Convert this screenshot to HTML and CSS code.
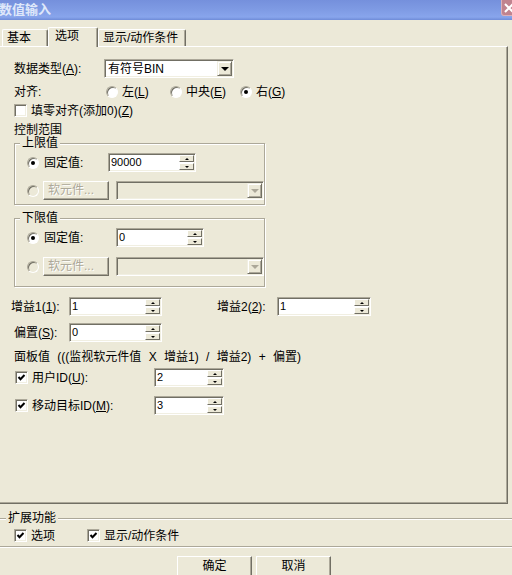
FILE: index.html
```html
<!DOCTYPE html>
<html lang="zh-CN">
<head>
    <meta charset="UTF-8">
    <title>数值输入</title>
    <link rel="stylesheet" href="styles.css">
</head>
<body>
    <div class="titlebar">
        <span class="title">数值输入</span>
        <span class="close">
            <svg width="10" height="10" viewBox="0 0 10 10"><path d="M1 1 L9 9 M9 1 L1 9" stroke="#fff" stroke-width="2"/></svg>
        </span>
    </div>

    <div class="tabs">
        <div class="tab tab-basic">基本</div>
        <div class="tab tab-active">选项</div>
        <div class="tab tab-cond">显示/动作条件</div>
    </div>

    <div class="panel">
        <div class="row r-type">
            <span class="lbl-type">数据类型(<u>A</u>):</span>
            <div class="combo combo-type">
                <span>有符号BIN</span>
                <span class="drop"><i class="tri"></i></span>
            </div>
        </div>

        <div class="row r-align">
            <span class="lbl-align">对齐:</span>
            <label class="opt opt-left"><i class="radio"></i><span>左(<u>L</u>)</span></label>
            <label class="opt opt-mid"><i class="radio"></i><span>中央(<u>E</u>)</span></label>
            <label class="opt"><i class="radio on"></i><span>右(<u>G</u>)</span></label>
        </div>

        <div class="row r-zero">
            <label class="opt"><i class="check"></i><span>填零对齐(添加0)(<u>Z</u>)</span></label>
        </div>

        <div class="row r-title">控制范围</div>

        <div class="group group-upper">
            <span class="group-title">上限值</span>
            <div class="row g-row1">
                <i class="radio on"></i>
                <span class="fix-lbl">固定值:</span>
                <div class="spin spin-88">
                    <span class="spin-val">90000</span>
                    <span class="spin-btns"><b class="sb"><i class="up"></i></b><b class="sb"><i class="dn"></i></b></span>
                </div>
            </div>
            <div class="row g-row2">
                <i class="radio off"></i>
                <span class="btn-dev">软元件...</span>
                <div class="combo combo-off">
                    <span class="drop"><i class="tri"></i></span>
                </div>
            </div>
        </div>

        <div class="group group-lower">
            <span class="group-title">下限值</span>
            <div class="row g-row1">
                <i class="radio on"></i>
                <span class="fix-lbl fix-wide">固定值:</span>
                <div class="spin spin-88">
                    <span class="spin-val">0</span>
                    <span class="spin-btns"><b class="sb"><i class="up"></i></b><b class="sb"><i class="dn"></i></b></span>
                </div>
            </div>
            <div class="row g-row2 g-row2-lower">
                <i class="radio off"></i>
                <span class="btn-dev">软元件...</span>
                <div class="combo combo-off">
                    <span class="drop"><i class="tri"></i></span>
                </div>
            </div>
        </div>

        <div class="row r-gain">
            <span class="lbl-gain1">增益1(<u>1</u>):</span>
            <div class="spin spin-93">
                <span class="spin-val">1</span>
                <span class="spin-btns"><b class="sb"><i class="up"></i></b><b class="sb"><i class="dn"></i></b></span>
            </div>
            <span class="lbl-gain2">增益2(<u>2</u>):</span>
            <div class="spin spin-94">
                <span class="spin-val">1</span>
                <span class="spin-btns"><b class="sb"><i class="up"></i></b><b class="sb"><i class="dn"></i></b></span>
            </div>
        </div>

        <div class="row r-offset">
            <span class="lbl-offset">偏置(<u>S</u>):</span>
            <div class="spin spin-93">
                <span class="spin-val">0</span>
                <span class="spin-btns"><b class="sb"><i class="up"></i></b><b class="sb"><i class="dn"></i></b></span>
            </div>
        </div>

        <div class="row r-formula">面板值 (((监视软元件值 X 增益1) / 增益2) + 偏置)</div>

        <div class="row r-user">
            <label class="opt opt-id"><i class="check on"></i><span>用户ID(<u>U</u>):</span></label>
            <div class="spin spin-70">
                <span class="spin-val">2</span>
                <span class="spin-btns"><b class="sb"><i class="up"></i></b><b class="sb"><i class="dn"></i></b></span>
            </div>
        </div>

        <div class="row r-move">
            <label class="opt opt-id"><i class="check on"></i><span>移动目标ID(<u>M</u>):</span></label>
            <div class="spin spin-70">
                <span class="spin-val">3</span>
                <span class="spin-btns"><b class="sb"><i class="up"></i></b><b class="sb"><i class="dn"></i></b></span>
            </div>
        </div>
    </div>

    <div class="group group-ext">
        <span class="group-title">扩展功能</span>
        <div class="row ext-row">
            <label class="opt opt-ext"><i class="check on"></i><span>选项</span></label>
            <label class="opt"><i class="check on"></i><span>显示/动作条件</span></label>
        </div>
    </div>

    <div class="buttons">
        <span class="btn">确定</span>
        <span class="btn">取消</span>
    </div>
</body>
</html>
```

FILE: styles.css
```css
:root {
    --face: #ece9d8;
    --shadow: #aca899;
    --dark: #716f64;
    --light: #f1efe2;
}

body {
    margin: 0;
    width: 512px;
    height: 575px;
    overflow: hidden;
    background-color: var(--face);
    font-family: "Liberation Sans", "Noto Sans CJK SC", sans-serif;
    font-size: 12px;
    line-height: 12px;
    color: #000;
}

u {
    text-underline-offset: 1px;
}

/* title bar */
.titlebar {
    height: 20px;
    display: flex;
    align-items: flex-start;
    overflow: hidden;
    background: linear-gradient(to bottom, #7590dc 0%, #7e9ae3 45%, #88a5ec 85%, #6f8cd8 100%);
}

.title {
    margin: 3px 0 0 -1px;
    font-size: 13px;
    line-height: 14px;
    font-weight: bold;
    color: #dfe8fa;
}

.close {
    margin-left: auto;
    margin-right: -10px;
    width: 21px;
    height: 16px;
    box-sizing: border-box;
    padding-left: 2px;
    display: flex;
    align-items: center;
    background-color: #c0838f;
    border: 1px solid #dcb0b8;
    border-top: none;
    border-radius: 0 0 0 3px;
}

/* tabs */
.tabs {
    height: 26px;
    display: flex;
    align-items: flex-end;
    padding-left: 2px;
}

.tab {
    height: 17px;
    box-sizing: border-box;
    border-top: 1px solid #fff;
    border-left: 1px solid #fff;
    border-right: 1px solid var(--dark);
    box-shadow: inset -1px 0 var(--shadow);
    border-radius: 2px 2px 0 0;
    padding-left: 4px;
    line-height: 16px;
    background-color: var(--face);
}

.tab-basic {
    width: 46px;
}

.tab-active {
    position: relative;
    z-index: 1;
    width: 50px;
    height: 20px;
    margin-bottom: -1px;
    padding-left: 6px;
    line-height: 17px;
}

.tab-cond {
    width: 88px;
}

/* tab page */
.panel {
    width: 508px;
    height: 458px;
    box-sizing: border-box;
    border-top: 1px solid #fff;
    border-right: 1px solid var(--dark);
    border-bottom: 1px solid var(--dark);
    box-shadow: inset -1px -1px var(--shadow);
    padding-left: 14px;
}

.row {
    display: flex;
    align-items: center;
}

.r-type { margin-top: 12px; height: 19px; }
.r-align { margin-top: 7px; height: 14px; }
.r-zero { margin-top: 5px; height: 13px; }
.r-title { margin-top: 7px; height: 11px; }
.r-gain { margin-top: 10px; height: 19px; margin-left: -3px; }
.r-offset { margin-top: 7px; height: 19px; }
.r-formula { margin-top: 9px; height: 12px; word-spacing: 4px; }
.r-user { margin-top: 5px; height: 19px; }
.r-move { margin-top: 9px; height: 19px; }

.lbl-type { width: 90px; }
.lbl-align { width: 92px; }
.lbl-gain1 { width: 58px; }
.lbl-gain2 { width: 60px; margin-left: 55px; }
.lbl-offset { width: 55px; }

.opt {
    display: flex;
    align-items: center;
    gap: 4px;
}

.opt-left { width: 64px; }
.opt-mid { width: 70px; }
.opt-id { width: 139px; margin-left: 1px; }
.opt-ext { width: 73px; }

/* radio + check */
.radio {
    width: 12px;
    height: 12px;
    flex: none;
    box-sizing: border-box;
    border-radius: 50%;
    border: 1px solid;
    border-color: var(--shadow) #fff #fff var(--shadow);
    box-shadow: inset 1px 1px var(--dark);
    background-color: #fff;
    display: flex;
    align-items: center;
    justify-content: center;
}

.radio.on::after {
    content: "";
    width: 4px;
    height: 4px;
    border-radius: 50%;
    background-color: #000;
}

.radio.off {
    background-color: var(--face);
}

.check {
    width: 13px;
    height: 13px;
    flex: none;
    box-sizing: border-box;
    border: 1px solid;
    border-color: var(--shadow) #fff #fff var(--shadow);
    box-shadow: inset 1px 1px var(--dark), inset -1px -1px var(--light);
    background-color: #fff;
}

.check.on {
    background: #fff url("data:image/svg+xml,%3Csvg xmlns='http://www.w3.org/2000/svg' width='11' height='11'%3E%3Cpath d='M2.5 5 L4.5 7.2 L8.5 3' fill='none' stroke='%23000' stroke-width='2'/%3E%3C/svg%3E") no-repeat center;
}

/* group boxes */
.group {
    box-sizing: border-box;
    border: 1px solid var(--shadow);
    box-shadow: 1px 1px 0 #fff, inset 1px 1px 0 #fff;
    padding-left: 12px;
}

.group-title {
    display: block;
    width: max-content;
    height: 12px;
    margin: -7px 0 0 -7px;
    padding: 0 2px;
    background-color: var(--face);
}

.group-upper {
    width: 251px;
    margin-top: 8px;
    padding-bottom: 4px;
}

.group-lower {
    width: 251px;
    margin-top: 13px;
    padding-bottom: 10px;
}

.g-row1 { margin-top: 4px; height: 19px; }
.g-row2 { margin-top: 9px; height: 19px; }
.g-row2-lower { margin-top: 10px; }

.fix-lbl {
    width: 64px;
    margin-left: 5px;
}

.fix-wide {
    width: 72px;
}

.btn-dev {
    width: 66px;
    height: 19px;
    box-sizing: border-box;
    margin-left: 4px;
    border: 1px solid;
    border-color: #fff var(--dark) var(--dark) #fff;
    box-shadow: inset -1px -1px var(--shadow);
    padding-left: 4px;
    line-height: 17px;
    color: var(--shadow);
    text-shadow: 1px 1px #fff;
}

/* combo box */
.combo {
    height: 19px;
    box-sizing: border-box;
    display: flex;
    align-items: center;
    padding: 0 1px 0 3px;
    border: 1px solid;
    border-color: var(--shadow) #fff #fff var(--shadow);
    box-shadow: inset 1px 1px var(--dark), inset -1px -1px var(--light);
    background-color: #fff;
}

.combo-type {
    width: 130px;
}

.combo-off {
    width: 149px;
    margin-left: 7px;
    background-color: var(--face);
}

.drop {
    margin-left: auto;
    width: 15px;
    height: 15px;
    box-sizing: border-box;
    display: flex;
    align-items: center;
    justify-content: center;
    background-color: var(--face);
    border: 1px solid;
    border-color: var(--light) var(--dark) var(--dark) var(--light);
    box-shadow: inset 1px 1px #fff, inset -1px -1px var(--shadow);
}

.tri {
    width: 0;
    height: 0;
    border-style: solid;
    border-width: 4px 4px 0;
    border-color: #000 transparent transparent;
}

.combo-off .tri {
    border-top-color: var(--shadow);
}

/* spin edit */
.spin {
    height: 19px;
    box-sizing: border-box;
    display: flex;
    border: 1px solid;
    border-color: var(--shadow) #fff #fff var(--shadow);
    box-shadow: inset 1px 1px var(--dark), inset -1px -1px var(--light);
    background-color: #fff;
}

.spin-70 { width: 70px; }
.spin-88 { width: 88px; }
.spin-93 { width: 93px; }
.spin-94 { width: 94px; }

.spin-val {
    flex: 1;
    padding-left: 2px;
    font-size: 11px;
    line-height: 17px;
}

.spin-btns {
    width: 15px;
    margin: 1px 1px 1px 0;
    display: flex;
    flex-direction: column;
    gap: 1px;
}

.sb {
    flex: 1;
    box-sizing: border-box;
    display: flex;
    align-items: center;
    justify-content: center;
    background-color: var(--face);
    border: 1px solid;
    border-color: #fff var(--dark) var(--dark) #fff;
}

.up, .dn {
    width: 0;
    height: 0;
    border-style: solid;
    border-color: transparent;
}

.up {
    border-width: 0 2px 2px;
    border-bottom-color: #000;
}

.dn {
    border-width: 2px 2px 0;
    border-top-color: #000;
}

/* extension group */
.group-ext {
    width: 518px;
    margin: 14px 0 0 -2px;
    padding: 0 0 4px 15px;
}

.group-ext .group-title {
    margin-left: -8px;
}

.ext-row {
    margin-top: 5px;
    height: 13px;
}

/* dialog buttons */
.buttons {
    display: flex;
    justify-content: center;
    gap: 4px;
    margin-top: 9px;
    padding-right: 4px;
}

.btn {
    width: 75px;
    height: 23px;
    box-sizing: border-box;
    border: 1px solid;
    border-color: #fff var(--dark) var(--dark) #fff;
    box-shadow: inset -1px -1px var(--shadow);
    text-align: center;
    line-height: 19px;
}
```
